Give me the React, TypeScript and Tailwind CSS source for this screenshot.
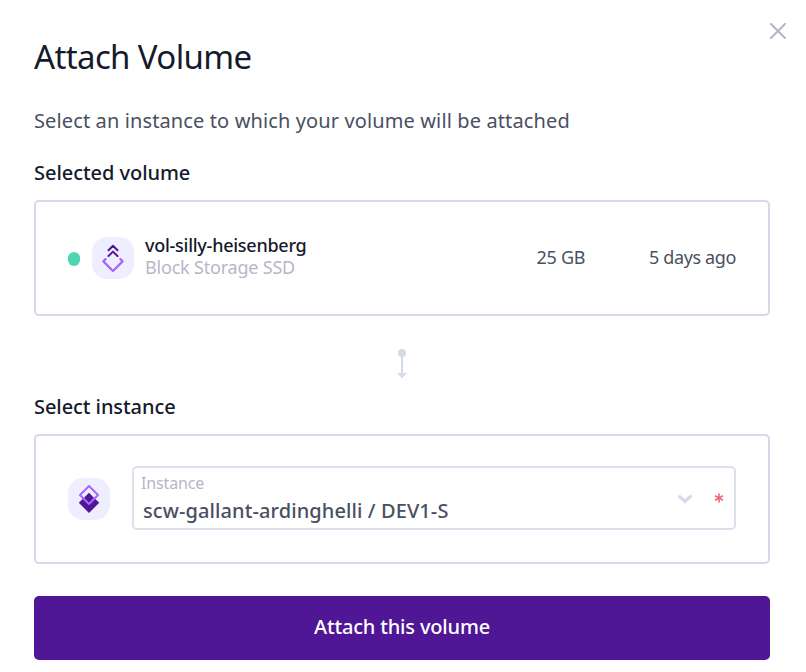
import React from "react";

function VolumeIcon() {
  return (
    <div className="flex h-[42px] w-[42px] shrink-0 items-center justify-center rounded-[15px] bg-[#eeeeff]">
      <svg width="42" height="42" viewBox="0 0 42 42" fill="none" strokeWidth="2" strokeLinecap="round" strokeLinejoin="round">
        <path d="M16.5 13.2L21 8.8L25.5 13.2M16.5 19L21 14.6L25.5 19" stroke="#4f1696" />
        <path d="M13.6 22L11.4 24.4L21 34L30.6 24.4L28.4 22" stroke="#a865ff" strokeWidth="2.3" />
      </svg>
    </div>
  );
}

function InstanceIcon() {
  return (
    <div className="flex h-[42px] w-[42px] shrink-0 items-center justify-center rounded-[15px] bg-[#eeeeff]">
      <svg width="42" height="42" viewBox="0 0 42 42" fill="none">
        <path d="M21 14.8L31.2 24.8L21 35L10.8 24.8Z" fill="#4f1696" />
        <path d="M21 8L30 17L21 26L12 17Z" fill="#eeeeff" />
        <path d="M21 14.8L26.2 20L21 25.2L15.8 20Z" fill="#4f1696" />
        <path d="M21 8L30 17L21 26L12 17Z" stroke="#a865ff" strokeWidth="2" strokeLinejoin="round" />
      </svg>
    </div>
  );
}

export default function App() {
  return (
    <main className="flex h-[672px] w-[806px] flex-col overflow-hidden bg-white pr-9 pl-[34px] font-['Noto_Sans','Open_Sans',sans-serif] whitespace-nowrap text-[#151a2d]">
      <header className="-mr-9 flex h-[90px] items-start justify-between pr-5">
        <h1 className="mt-[33px] text-[33px] leading-[48px] tracking-[-0.63px]">Attach Volume</h1>
        <button aria-label="Close" className="mt-[23px]">
          <svg width="16" height="16" viewBox="0 0 16 16" stroke="#b2b6c3" strokeWidth="2" strokeLinecap="round">
            <path d="M1 1L15 15M15 1L1 15" />
          </svg>
        </button>
      </header>
      <p className="mt-4 h-[30px] text-[20px] leading-[30px] text-[#4a4f62]">
        <span className="tracking-[0.12px]">Select an instance to which your volume will be attached</span>
      </p>
      <h2 className="mt-[22px] h-[30px] text-[20px] leading-[30px] font-medium tracking-[-0.05px]">
        <span>Selected volume</span>
      </h2>
      <section className="mt-3 flex h-[116px] shrink-0 items-center rounded-[5px] border-2 border-[#d4dae7] px-8">
        <i className="mt-0.5 mr-3 h-[14px] w-3 rounded-full bg-[#4fd5b4]" />
        <VolumeIcon />
        <div className="-mt-[5px] ml-[11px] flex flex-1 flex-col text-[18px] leading-[22px]">
          <span className="font-medium tracking-[-0.26px]">vol-silly-heisenberg</span>
          <span className="tracking-[-0.2px] text-[#b5b7c8]">Block Storage SSD</span>
        </div>
        <span className="mr-16 -mt-0.5 text-[18px] tracking-[-0.3px] text-[#4a4f62]">25 GB</span>
        <span className="-mt-0.5 text-[18px] tracking-[-0.38px] text-[#4a4f62]">5 days ago</span>
      </section>
      <div className="mt-[33px] flex justify-center">
        <svg width="12" height="30" viewBox="0 0 12 30" fill="#d4dae7">
          <circle cx="6" cy="4" r="4" />
          <path d="M5 4H7V24H11L6 29.3L1 24H5Z" />
        </svg>
      </div>
      <h2 className="mt-[13px] h-[30px] text-[20px] leading-[30px] font-medium tracking-[-0.07px]">
        <span>Select instance</span>
      </h2>
      <section className="mt-3 flex h-[130px] shrink-0 items-center rounded-[5px] border-2 border-[#d4dae7] px-8">
        <InstanceIcon />
        <div className="-mt-0.5 ml-[22px] flex h-16 flex-1 items-center rounded-[5px] border-2 border-[#dbe0ec]">
          <div className="flex flex-1 flex-col">
            <span className="ml-[7px] text-[16px] leading-6 tracking-[-0.15px] text-[#b5b7c8]">Instance</span>
            <span className="ml-[9px] text-[20px] leading-[31px] font-medium tracking-[0.1px] text-[#4a4f62]">scw-gallant-ardinghelli / DEV1-S</span>
          </div>
          <svg className="mt-0.5 mr-[21px]" width="16" height="12" viewBox="0 0 16 12" fill="none" stroke="#d4dae7" strokeWidth="3.2" strokeLinecap="round">
            <path d="M2.5 3.5L8 8.3L13.5 3.5" />
          </svg>
          <svg className="mr-2.5" width="10" height="10" viewBox="0 0 10 10" stroke="#f16680" strokeWidth="1.6">
            <path d="M5 .5V9.5M1 2.7L9 7.3M9 2.7L1 7.3" />
          </svg>
        </div>
      </section>
      <button className="mt-8 h-16 shrink-0 rounded-[5px] bg-[#4f1696] pb-0.5 text-[20px] font-medium tracking-[-0.17px] text-white">
        <span>Attach this volume</span>
      </button>
    </main>
  );
}
